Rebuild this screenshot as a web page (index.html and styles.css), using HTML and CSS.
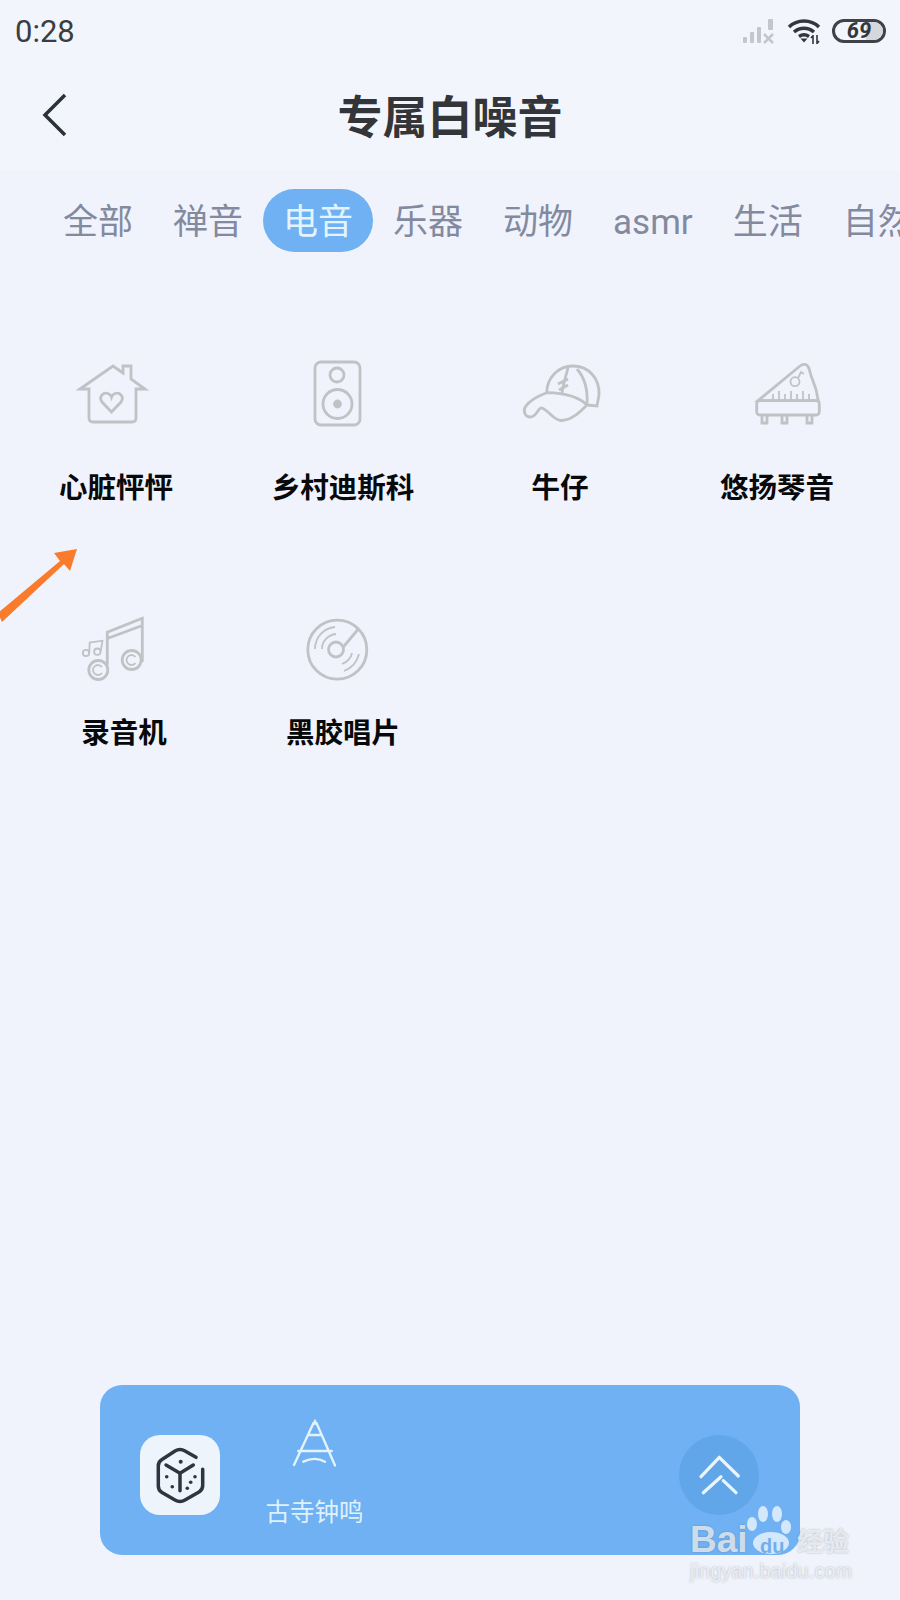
FILE: index.html
```html
<!DOCTYPE html>
<html lang="zh-CN">
<head>
    <meta charset="UTF-8">
    <meta name="viewport" content="width=device-width, initial-scale=1.0">
    <title>专属白噪音</title>
    <link rel="stylesheet" href="styles.css">
</head>
<body>
    <div class="status">
        <span class="time">0:28</span>
        <svg class="signal" width="34" height="26" viewBox="0 0 34 26">
            <rect x="1" y="19" width="4" height="6" rx="1"/>
            <rect x="8" y="14" width="4" height="11" rx="1"/>
            <rect x="15" y="9" width="4" height="16" rx="1"/>
            <rect x="26" y="1" width="5" height="11" rx="1"/>
            <path d="M22 16l9 9M31 16l-9 9" class="signal-x"/>
        </svg>
        <svg class="wifi" width="34" height="26" viewBox="0 0 34 26">
            <path d="M2 9C10 1 24 1 32 9M7 14c6-5 14-5 20 0M12 18.500c3-2 7-2 10 0" class="wifi-arc"/>
            <path d="M13.500 20.500h7l-3.500 4z" class="wifi-dot"/>
            <path d="M26 17v9M30 17v9M24 20l2-2.500M32 23l-2 2.500" class="wifi-updown"/>
        </svg>
        <div class="battery"><span class="battery-fill"></span><span class="battery-num">69</span></div>
    </div>

    <header class="header">
        <svg class="back" width="28" height="44" viewBox="0 0 28 44">
            <path d="M25 2L5 22l20 20"/>
        </svg>
        <h1>专属白噪音</h1>
        <span></span>
    </header>

    <nav class="tabs">
        <a class="tab">全部</a>
        <a class="tab">禅音</a>
        <a class="tab active">电音</a>
        <a class="tab">乐器</a>
        <a class="tab">动物</a>
        <a class="tab">asmr</a>
        <a class="tab">生活</a>
        <a class="tab">自然</a>
    </nav>

    <main class="grid">
        <div class="item">
            <svg class="icon" viewBox="0 0 120 90">
                <path d="M24 39L57 16l10 7v-7h8v13l14 10h-9v29q0 4-4 4H37q-4 0-4-4V39z"/>
                <path d="M55.500 62L46 52c-4-6 2-10 6-8.500 2 .7 3 2 3.500 3.500 .5-1.500 1.500-2.800 3.500-3.500 4-1.500 10 2.500 6 8.500z"/>
            </svg>
            <div class="name">心脏怦怦</div>
        </div>
        <div class="item">
            <svg class="icon" viewBox="0 0 120 90">
                <rect x="32" y="12" width="45" height="63" rx="6"/>
                <circle cx="54" cy="25" r="7"/>
                <circle cx="54.500" cy="54" r="14.500"/>
                <circle cx="54.500" cy="54" r="3" class="fill"/>
            </svg>
            <div class="name">乡村迪斯科</div>
        </div>
        <div class="item">
            <svg class="icon" viewBox="0 0 120 90">
                <path d="M46.700 42.700C47 28 58 16 73 16c16 0 27 13 26 29l-2 11-10-1"/>
                <path d="M46.700 42.700C62 43 78 46 87 55c-7 7-15 15-25 15.500-8 .5-13-10-20-12.500-4-1-5 9-12 9-6 0-7-8-4-11 4-6 12-10 20.700-13.300z"/>
                <path d="M87 55c1-15-2-27-10-36M68 18c-2 8-5 16-6 25M58 34l10-5M59 40l9-5"/>
            </svg>
            <div class="name">牛仔</div>
        </div>
        <div class="item">
            <svg class="icon" viewBox="0 0 120 90">
                <path d="M41 50.700L83 16c3-2.500 7-2 8.300 1 2 4 2 8 4 12 3 7 5 14 6 21.700z"/>
                <rect x="39.700" y="50.700" width="62.600" height="14.300" rx="3"/>
                <path d="M45 65v8h5v-8M65 65v8h5v-8M90 65v8h5v-8"/>
                <path d="M56 44v6M62 41v9M68 44v6M74 41v9M80 44v6M86 41v9M92 44v6" class="thin"/>
                <circle cx="78" cy="31.700" r="4.500" class="thin"/>
                <path d="M81 28l3-6 3 2" class="thin"/>
            </svg>
            <div class="name">悠扬琴音</div>
        </div>
        <div class="item shifted">
            <svg class="icon" viewBox="0 0 120 90">
                <path d="M43.300 70V37.300l35-14V67M43.300 43.500l35-13"/>
                <circle cx="34.300" cy="75" r="9.500"/>
                <circle cx="67.700" cy="65" r="9.500"/>
                <path d="M38 72a5 5 0 1 0 0 6M71.500 62a5 5 0 1 0 0 6" class="thin"/>
                <circle cx="22" cy="58" r="3.200" class="thin"/>
                <circle cx="33.300" cy="56.700" r="3.200" class="thin"/>
                <path d="M25.200 58l.5-10.500 12.800-1.800-1.900 11" class="thin"/>
            </svg>
            <div class="name">录音机</div>
        </div>
        <div class="item">
            <svg class="icon" viewBox="0 0 120 90">
                <circle cx="54.300" cy="54.700" r="29.500"/>
                <circle cx="53" cy="54.500" r="7.500"/>
                <path d="M60.300 52L75.300 34"/>
                <path d="M39 54c0-8 6-14 14-15M32 54c0-12 9-21 20-22M69 58c-1 5-5 9-10 11M76 59c-2 8-7 14-15 17" class="thin"/>
            </svg>
            <div class="name">黑胶唱片</div>
        </div>
    </main>

    <div class="player">
        <div class="dice">
            <svg width="80" height="80" viewBox="0 0 80 80">
                <path d="M56 22.300L45 16q-5-3-10 0L22 24.500q-3.700 2.200-3.700 6.500v20q0 4.300 3.700 6.500L35 65q5 3 10 0l14-8q3.700-2.200 3.700-6.500V34.300"/>
                <path d="M26 30l14 8.300L53.300 30M40 38.300v17.400"/>
                <g class="pips">
                    <circle cx="40.700" cy="26.700" r="2"/>
                    <circle cx="26.700" cy="41.700" r="1.800"/>
                    <circle cx="32.300" cy="51.700" r="1.800"/>
                    <circle cx="55" cy="41.700" r="1.800"/>
                    <circle cx="50.700" cy="47.300" r="1.800"/>
                    <circle cx="47.300" cy="53.300" r="1.800"/>
                </g>
            </svg>
        </div>
        <div class="sound">
            <svg width="60" height="56" viewBox="0 0 60 56">
                <path d="M28.500 8L9 50M31.500 8L50 50.500M30 5.700v3M23.300 20h13.400M13.300 36h33.400M18.300 46.700q11.700-5.700 21.700 0"/>
            </svg>
            <div class="sound-name">古寺钟鸣</div>
        </div>
        <div class="up">
            <svg width="80" height="80" viewBox="0 0 80 80">
                <path d="M22 41.700L40.300 22.300 59.300 41M24.300 57.700L42 41.700M44.300 45.700L57 57.700"/>
            </svg>
        </div>
    </div>

    <!-- over the content: arrow and watermark from the screenshot -->
    <svg class="arrow" width="80" height="74" viewBox="0 0 80 74">
        <path d="M-2 67L60 15l-6-8L77 3 70 25l-6-7L2 76z"/>
    </svg>

    <div class="watermark">
        <span class="wm-bai">Bai</span>
        <svg class="wm-paw" width="50" height="52" viewBox="0 0 50 52">
            <ellipse cx="7" cy="20" rx="5" ry="7"/>
            <ellipse cx="18" cy="10" rx="5" ry="8"/>
            <ellipse cx="32" cy="10" rx="5" ry="8"/>
            <ellipse cx="41" cy="23" rx="5" ry="7"/>
            <ellipse cx="26" cy="39" rx="18" ry="11"/>
        </svg>
        <span class="wm-du">du</span>
        <span class="wm-jy">经验</span>
        <span class="wm-url">jingyan.baidu.com</span>
    </div>
</body>
</html>
```

FILE: styles.css
```css
* {
    box-sizing: border-box;
}
body {
    margin: 0;
    width: 900px;
    height: 1600px;
    position: relative;
    overflow: hidden;
    display: flex;
    flex-direction: column;
    background-color: #f0f3fb;
    font-family: "Noto Sans CJK SC", "Noto Sans", sans-serif;
}

/* status bar */
.status {
    height: 62px;
    padding: 0 14px 0 15px;
    display: flex;
    align-items: center;
    background-color: #f2f5fc;
}
.time {
    font-family: Roboto, sans-serif;
    font-size: 31px;
    color: #3a3d42;
    margin-right: auto;
}
.signal rect {
    fill: #c3c6cc;
}
.signal-x {
    fill: none;
    stroke: #c3c6cc;
    stroke-width: 2.5;
}
.wifi {
    margin-left: 11px;
}
.wifi-arc {
    fill: none;
    stroke: #33363b;
    stroke-width: 3.4;
}
.wifi-dot {
    fill: #33363b;
}
.wifi-updown {
    fill: none;
    stroke: #33363b;
    stroke-width: 1.6;
}
.battery {
    position: relative;
    width: 54px;
    height: 24px;
    margin-left: 11px;
    border: 3px solid #3f4247;
    border-radius: 12px;
    overflow: hidden;
    text-align: center;
}
.battery-fill {
    position: absolute;
    right: 0;
    top: 0;
    bottom: 0;
    width: 17px;
    background-color: #d5d7da;
}
.battery-num {
    position: relative;
    display: block;
    font-family: Roboto, sans-serif;
    font-size: 22px;
    font-weight: 700;
    font-style: italic;
    line-height: 18px;
    color: #33363b;
}

/* title */
.header {
    height: 110px;
    padding-bottom: 4px;
    display: grid;
    grid-template-columns: 1fr auto 1fr;
    align-items: center;
    background-color: #f2f5fc;
    border-bottom: 1px solid #eff2fa;
}
.header h1 {
    margin: 0;
    font-size: 45px;
    line-height: 60px;
    font-weight: 700;
    color: #333539;
}
.back {
    margin-left: 40px;
}
.back path {
    fill: none;
    stroke: #2c3038;
    stroke-width: 3.5;
}

/* tabs */
.tabs {
    display: flex;
    padding: 17px 0 0 43px;
    white-space: nowrap;
    font-family: Roboto, "Noto Sans CJK SC", sans-serif;
}
.tab {
    flex: none;
    height: 63px;
    padding: 0 20px;
    border-radius: 32px;
    font-size: 35px;
    line-height: 68px;
    color: #838aa0;
}
.tab.active {
    background-color: #6fb1f3;
    color: #e4f4fc;
}

/* sounds */
.grid {
    display: grid;
    grid-template-columns: 232px 222px 212px 222px;
    row-gap: 89px;
    padding-top: 98px;
}
.item {
    display: flex;
    flex-direction: column;
    align-items: center;
}
.item.shifted {
    padding-left: 16px;
}
.icon {
    width: 120px;
    height: 90px;
    fill: none;
    stroke: #c0c2c5;
    stroke-width: 2.8;
}
.icon .thin {
    stroke-width: 1.8;
}
.icon .fill {
    fill: #c0c2c5;
}
.name {
    margin-top: 26px;
    font-size: 28.500px;
    line-height: 40px;
    font-weight: 700;
    color: #08090b;
}

/* player */
.player {
    margin: auto 100px 45px;
    height: 170px;
    display: flex;
    align-items: flex-start;
    padding: 0 41px 0 40px;
    border-radius: 22px;
    background-color: #6fb1f3;
}
.dice {
    width: 80px;
    height: 80px;
    margin-top: 50px;
    border-radius: 20px;
    background-color: #edf4fc;
}
.dice path {
    fill: none;
    stroke: #2f3540;
    stroke-width: 3.5;
    stroke-linecap: round;
}
.pips {
    fill: #2f3540;
}
.sound {
    width: 97px;
    margin: 30px 0 0 46px;
    display: flex;
    flex-direction: column;
    align-items: center;
}
.sound path {
    fill: none;
    stroke: #e3f3fb;
    stroke-width: 2.4;
    stroke-linecap: round;
}
.sound-name {
    margin-top: 25px;
    font-size: 24.500px;
    line-height: 30px;
    color: #dff1fb;
    white-space: nowrap;
}
.up {
    width: 80px;
    height: 80px;
    margin: 50px 0 0 auto;
    border-radius: 50%;
    background-color: #62a6ea;
}
.up path {
    fill: none;
    stroke: #eaf6fd;
    stroke-width: 3.2;
    stroke-linecap: round;
    stroke-linejoin: round;
}

/* overlays */
.arrow {
    position: absolute;
    left: 0;
    top: 546px;
    overflow: visible;
}
.arrow path {
    fill: #f97b2b;
}
.watermark {
    position: absolute;
    left: 690px;
    top: 1500px;
    width: 170px;
    height: 84px;
    color: rgba(255, 255, 255, 0.7);
    text-shadow: 0 0 2px rgba(90, 105, 130, 0.5);
}
.watermark span {
    position: absolute;
    white-space: nowrap;
}
.wm-bai {
    left: 0;
    top: 18px;
    font-family: "Liberation Sans", sans-serif;
    font-size: 37px;
    line-height: 44px;
    font-weight: 700;
}
.wm-paw {
    position: absolute;
    left: 55px;
    top: 4px;
    fill: rgba(255, 255, 255, 0.7);
}
.wm-du {
    left: 70px;
    top: 32px;
    font-family: "Liberation Sans", sans-serif;
    font-size: 20px;
    line-height: 28px;
    font-weight: 700;
    color: #74aeea;
    text-shadow: none;
}
.wm-jy {
    left: 107px;
    top: 22px;
    font-size: 26px;
    line-height: 36px;
    font-weight: 700;
}
.wm-url {
    left: 0;
    top: 59px;
    font-family: "Liberation Sans", sans-serif;
    font-size: 19.500px;
    line-height: 24px;
    letter-spacing: 0.3px;
}
```
